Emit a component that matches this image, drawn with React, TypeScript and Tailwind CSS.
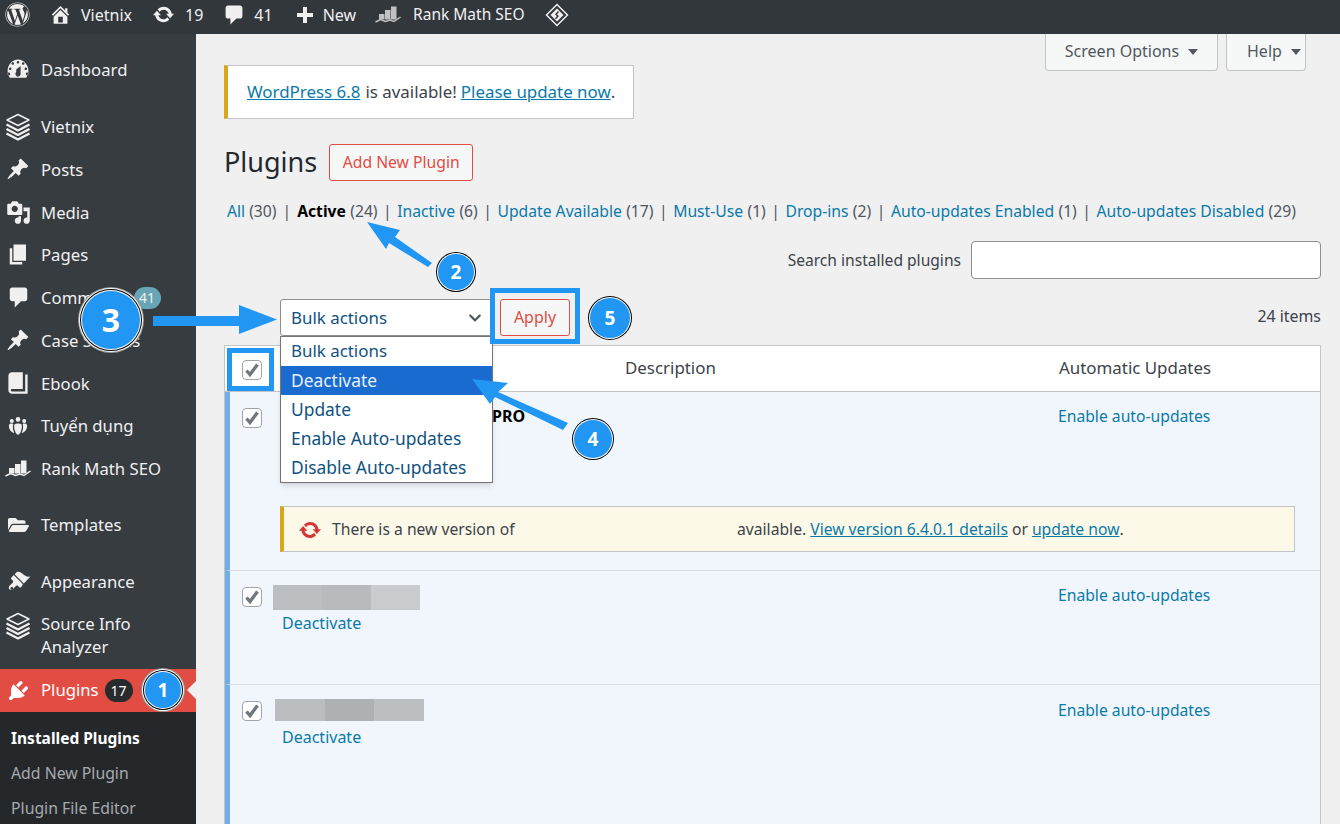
import React from "react";
import { FaWordpress, FaFolderOpen, FaChevronDown } from "react-icons/fa";

type IP = { className?: string };
const Glyph = ({ d, className = "" }: IP & { d: string }) => (
  <svg viewBox="0 0 20 20" className={className} fill="currentColor" fillRule="evenodd"><path d={d} /></svg>
);
const Comment = (p: IP) => <Glyph {...p} d="M5 2h10c1.100 0 2 .9 2 2v7c0 1.100-.9 2-2 2h-3l-5 5v-5H5c-1.100 0-2-.9-2-2V4c0-1.100.9-2 2-2z" />;
const Sync = (p: IP) => <Glyph {...p} d="M10.200 3.280c3.530 0 6.430 2.610 6.920 6h2.080l-3.500 4-3.500-4h2.320c-.45-1.970-2.210-3.450-4.320-3.450-1.450 0-2.730.71-3.540 1.780L4.950 5.660C6.230 4.200 8.110 3.280 10.200 3.280zm-.4 13.440c-3.520 0-6.430-2.610-6.920-6H.8l3.500-4c1.170 1.330 2.330 2.670 3.500 4H5.480c.45 1.970 2.210 3.450 4.320 3.450 1.450 0 2.730-.71 3.540-1.780l1.710 1.950c-1.280 1.460-3.150 2.380-5.250 2.380z" />;
const Home = (p: IP) => <Glyph {...p} d="M16 8.500l1.530 1.530-1.060 1.060L10 4.620l-6.470 6.470-1.060-1.060L10 2.500l4 4v-2h2v4zm-6-2.460l6 5.990V18H4v-5.970zM12 17v-5H8v5h4z" />;
const Plus = (p: IP) => <Glyph {...p} d="M18 8v4h-6v6H8v-6H2V8h6V2h4v6z" />;
const Gauge = (p: IP) => <Glyph {...p} d="M3.760 16h12.480c1.100-1.430 1.760-3.210 1.760-5.140 0-4.750-3.580-8.860-8-8.860-4.420 0-8 4.110-8 8.860 0 1.930.66 3.710 1.760 5.140zM10 3c.55 0 1 .45 1 1s-.45 1-1 1-1-.45-1-1 .45-1 1-1zM6 4c.55 0 1 .45 1 1s-.45 1-1 1-1-.45-1-1 .45-1 1-1zm8 0c.55 0 1 .45 1 1s-.45 1-1 1-1-.45-1-1 .45-1 1-1zm-5.370 5.550L12 7v6c0 1.100-.9 2-2 2s-2-.9-2-2c0-.57.24-1.080.63-1.450zM4 8c.55 0 1 .45 1 1s-.45 1-1 1-1-.45-1-1 .45-1 1-1zm12 0c.55 0 1 .45 1 1s-.45 1-1 1-1-.45-1-1 .45-1 1-1zM3 12c.55 0 1 .45 1 1s-.45 1-1 1-1-.45-1-1 .45-1 1-1zm14 0c.55 0 1 .45 1 1s-.45 1-1 1-1-.45-1-1 .45-1 1-1z" />;
const Pin = (p: IP) => <Glyph {...p} d="M10.440 3.020l1.820-1.820 6.360 6.350-1.830 1.820c-1.050-.68-2.480-.57-3.410.36l-.75.75c-.92.93-1.040 2.350-.35 3.400l-1.830 1.820-2.410-2.410-2.800 2.790c-.42.42-3.380 2.710-3.800 2.290s1.860-3.390 2.280-3.810l2.790-2.790L4.100 9.360l1.830-1.820c1.050.69 2.480.57 3.400-.36l.75-.75c.93-.92 1.050-2.350.36-3.410z" />;
const Media = (p: IP) => <Glyph {...p} d="M13 11V4c0-.55-.45-1-1-1h-1.670L9 1H5L3.670 3H2c-.55 0-1 .45-1 1v7c0 .55.45 1 1 1h10c.55 0 1-.45 1-1zM7 4.500c1.380 0 2.500 1.120 2.500 2.500S8.380 9.500 7 9.500 4.500 8.380 4.500 7 5.620 4.500 7 4.500zM14 6h5v10.500c0 1.380-1.120 2.500-2.500 2.500S14 17.880 14 16.500s1.120-2.500 2.500-2.500c.17 0 .34.02.5.05V9h-3V6zm-4 8.050V13h2v3.500c0 1.380-1.120 2.500-2.500 2.500S7 17.880 7 16.500 8.120 14 9.500 14c.17 0 .34.02.5.05z" />;
const Pages = (p: IP) => <Glyph {...p} d="M6 15V2h10v13H6zm-1 1h8v2H3V5h2v11z" />;
const Ebook = (p: IP) => <Glyph {...p} d="M16 3h2v16H5c-1.660 0-3-1.340-3-3V4c0-1.660 1.340-3 3-3h9v14H5c-.55 0-1 .45-1 1s.45 1 1 1h11V3z" />;
const Brush = (p: IP) => <Glyph {...p} d="M14.480 11.060L7.410 3.990l1.500-1.500c.5-.56 2.300-.47 3.510.32 1.210.8 1.430 1.280 2.910 2.100 1.180.64 2.450 1.260 4.230.91zm-.71.71L6.700 4.700 4.930 6.470c-.39.39-.39 1.020 0 1.410l1.060 1.060c.39.39.39 1.030 0 1.420-.6.6-1.600 1.590-2.120 2.120-.53.53-1.600 1.950-.5 3.050s2.520.03 3.050-.5c.53-.52 1.530-1.520 2.120-2.120.4-.4 1.030-.4 1.420 0l1.060 1.060c.39.39 1.020.39 1.410 0zM4.500 15.500c-.4-.4-.4-1 0-1.400s1-.4 1.400 0 .4 1 0 1.400-1 .4-1.400 0z" />;
const Plug = (p: IP) => <Glyph {...p} d="M13.110 4.360L9.870 7.600 8 5.730l3.240-3.240c.35-.34 1.050-.2 1.560.32.52.51.66 1.210.31 1.550zm-8 1.770l.91-1.120 9.010 9.010-1.190.84c-.71.71-2.630 1.160-3.820 1.160H6.140L4.900 17.260c-.59.59-1.540.59-2.120 0-.59-.58-.59-1.530 0-2.120l1.240-1.240v-3.880c0-1.130.4-3.190 1.090-3.890zm7.260 3.970l3.240-3.240c.34-.35 1.040-.21 1.550.31.52.51.66 1.210.31 1.550l-3.240 3.250z" />;
const Groups = ({ className = "" }: IP) => (
  <svg viewBox="0 0 20 20" className={className} fill="currentColor">
    <circle cx="10" cy="3.400" r="2.300" /><circle cx="3.800" cy="5" r="2" /><circle cx="16.200" cy="5" r="2" />
    <path d="M6.400 8.400c1.800-1.300 5.400-1.300 7.200 0 .8 3.800-.6 7.800-2.600 10H9c-2-2.200-3.400-6.200-2.600-10z" />
    <path d="M1 9c.8-1.400 2.600-1.700 4.300-1.100-.9 3.200-.3 6.600 1.100 9.200C3 16.500.4 12.800 1 9zM19 9c-.8-1.400-2.600-1.700-4.300-1.100.9 3.200.3 6.600-1.100 9.200 3.400-.6 6-4.300 5.400-8.100z" />
  </svg>
);
const RankMath = ({ className = "" }: IP) => (
  <svg viewBox="0 0 26 17" className={className} fill="currentColor">
    <path d="M4 8h5.500v5.500H4zM10 4h5.500v9.500H10zM16 .5h5.500v13H16z" />
    <path d="M.5 16L5.500 13.500 10.500 15.500 15 14 19 15.500 25.500 11" fill="none" stroke="currentColor" strokeWidth="1.500" />
  </svg>
);
const Stack = ({ className = "" }: IP) => (
  <svg viewBox="0 0 26 28" className={className} fill="none" stroke="currentColor" strokeLinejoin="round">
    <path d="M13 1.500l11 5.500-11 5.500L2 7z" strokeWidth="1.500" />
    <path d="M1.500 11.500l11.500 6 11.500-6M1.500 16l11.500 6 11.500-6M1.500 20.500l11.500 6 11.500-6" strokeWidth="2.200" />
  </svg>
);
const Diamond = ({ className = "" }: IP) => (
  <svg viewBox="0 0 24 24" className={className} fill="none" stroke="currentColor">
    <path d="M12 1.500L22.500 12 12 22.500 1.500 12z" strokeWidth="1.500" />
    <path d="M12 5.500l6.500 6.500-6.500 6.500L5.500 12z" fill="currentColor" stroke="none" />
    <path d="M13.500 8.500l-2.500 3 2 1.500-2.500 2.800" stroke="#32373c" strokeWidth="1.400" />
  </svg>
);

const Side = ({ icon, children, className = "" }: { icon: React.ReactNode; children: React.ReactNode; className?: string }) => (
  <div className={`flex items-center h-[42.750px] shrink-0 text-[#f0f0f1] ${className}`}>
    <span className="w-[41px] flex justify-center pr-[5px] shrink-0">{icon}</span>
    <span>{children}</span>
  </div>
);

const Check = ({ className = "" }: IP) => (
  <span className={`flex items-center justify-center w-[20px] h-[20px] rounded-[4px] border border-[#a0a4a8] bg-white shrink-0 ${className}`}>
    <svg viewBox="0 0 16 16" className="w-[16px] h-[16px]" fill="none" stroke="#6f777f" strokeWidth="3.400"><path d="M2.500 8.500l3.500 4 7.500-10" /></svg>
  </span>
);

const Caret = () => <span className="inline-block w-0 h-0 border-x-[5px] border-x-transparent border-t-[6px] border-t-[#50575e] ml-[9px] mt-[2px]" />;

const Link = ({ children, className = "" }: { children: React.ReactNode; className?: string }) => (
  <a className={`text-[#0a7aa8] ${className}`}>{children}</a>
);

const Filter = ({ label, n }: { label: string; n: string }) => (
  <span className="flex items-center">
    <span className="text-[#50575e] mx-[5.500px]">|</span>
    <Link>{label}</Link>
    <span className="text-[#50575e] ml-[4.300px]">{n}</span>
  </span>
);

const Circle = ({ n, className }: { n: string; className: string }) => (
  <div className={`absolute flex items-center justify-center rounded-full bg-[#2196f3] text-white font-bold ${className}`}>{n}</div>
);

export default function App() {
  return (
    <div className="relative w-[1340px] h-[824px] overflow-hidden bg-[#f0f0f1] font-['Noto_Sans',sans-serif] text-[16px] text-[#3c434a] flex flex-col">
      {/* Admin bar */}
      <header className="h-[34px] shrink-0 bg-[#32373c] text-[#f0f0f1] flex items-center pb-[5px] text-[16px] leading-none">
        <FaWordpress className="w-[25px] h-[25px] ml-[5px]" />
        <Home className="w-[23px] h-[23px] ml-[19px]" />
        <span className="ml-[9px]">Vietnix</span>
        <Sync className="w-[23px] h-[23px] ml-[20px]" />
        <span className="ml-[10px]">19</span>
        <Comment className="w-[24px] h-[24px] ml-[19px]" />
        <span className="ml-[8px]">41</span>
        <Plus className="w-[20px] h-[20px] ml-[22px]" />
        <span className="ml-[8px]">New</span>
        <RankMath className="w-[26px] h-[17px] ml-[19px] opacity-75" />
        <span className="ml-[12px] text-[15.500px]">Rank Math SEO</span>
        <Diamond className="w-[24px] h-[24px] ml-[20px]" />
      </header>

      <div className="flex flex-1 min-h-0">
        {/* Sidebar */}
        <aside className="w-[196px] shrink-0 bg-[#373c41] flex flex-col pt-[14.600px] overflow-hidden text-[16.700px]">
          <Side icon={<Gauge className="w-[26px] h-[26px]" />}>Dashboard</Side>
          <Side className="mt-[13.900px]" icon={<Stack className="w-[26px] h-[28px]" />}>Vietnix</Side>
          <Side icon={<Pin className="w-[24px] h-[24px]" />}>Posts</Side>
          <Side icon={<Media className="w-[25px] h-[25px]" />}>Media</Side>
          <Side icon={<Pages className="w-[25px] h-[25px]" />}>Pages</Side>
          <Side icon={<Comment className="w-[25px] h-[25px]" />}>
            <span className="flex items-center">Comments<span className="ml-[7px] h-[22px] w-[27px] rounded-full bg-[#67a5b5] text-[14px] flex items-center justify-center">41</span></span>
          </Side>
          <Side icon={<Pin className="w-[24px] h-[24px]" />}>Case Studies</Side>
          <Side icon={<Ebook className="w-[24px] h-[24px]" />}>Ebook</Side>
          <Side icon={<Groups className="w-[20px] h-[20px]" />}>Tuyển dụng</Side>
          <Side icon={<RankMath className="w-[26px] h-[17px]" />}>Rank Math SEO</Side>
          <Side className="mt-[13.550px]" icon={<FaFolderOpen className="w-[21px] h-[20px]" />}>Templates</Side>
          <Side className="mt-[14.250px]" icon={<Brush className="w-[26px] h-[26px]" />}>Appearance</Side>
          <div className="flex h-[65.600px] shrink-0 text-[#f0f0f1] leading-[23px] pt-[9px]">
            <span className="w-[41px] flex justify-center pr-[5px] shrink-0"><Stack className="w-[26px] h-[28px]" /></span>
            <span>Source Info<br />Analyzer</span>
          </div>
          <div className="relative flex items-center h-[43px] shrink-0 bg-[#e14d43] text-white">
            <span className="w-[41px] flex justify-center pr-[5px] shrink-0"><Plug className="w-[25px] h-[25px]" /></span>
            <span className="pb-[1px]">Plugins</span>
            <span className="ml-[6px] w-[28px] h-[23px] rounded-full bg-[#272b2e] text-[14px] flex items-center justify-center">17</span>
            <span className="absolute right-0 top-1/2 -translate-y-1/2 w-0 h-0 border-y-[9px] border-y-transparent border-r-[9px] border-r-[#f0f0f1]" />
          </div>
          <div className="flex-1 shrink-0 bg-[#25282b] pt-[9.500px] pl-[11px] text-[15.800px]">
            <div className="h-[35px] flex items-center font-bold text-white text-[15.500px]">Installed Plugins</div>
            <div className="h-[35px] flex items-center text-[#a7aaad]">Add New Plugin</div>
            <div className="h-[35px] flex items-center text-[#a7aaad]">Plugin File Editor</div>
          </div>
        </aside>

        {/* Main */}
        <main className="flex-1 min-w-0 pl-[28px] pr-[19px] flex flex-col">
          <div className="relative">
            <div className="absolute top-0 right-[15px] flex gap-[8px] text-[#50575e]">
              <div className="h-[37px] w-[173px] bg-[#f6f7f7] border border-t-0 border-[#c3c4c7] rounded-b-[4px] flex items-center justify-center pb-[2px]">Screen Options<Caret /></div>
              <div className="h-[37px] w-[80px] bg-[#f6f7f7] border border-t-0 border-[#c3c4c7] rounded-b-[4px] flex items-center pl-[20px] pb-[2px]">Help<Caret /></div>
            </div>
          </div>

          <div className="mt-[31px] w-[410px] h-[54px] bg-white border border-[#c3c4c7] border-l-[4px] border-l-[#dba617] flex items-center pl-[19px] text-[16.900px]">
            <Link className="underline">WordPress 6.8</Link>
            <span className="ml-[5px]">is available!</span>
            <Link className="underline ml-[4px]">Please update now</Link>.
          </div>

          <div className="mt-[25px] h-[37px] flex items-center">
            <h1 className="text-[27px] text-[#23282d] font-normal">Plugins</h1>
            <button className="ml-[12px] w-[144px] h-[37px] rounded-[3px] border border-[#e14d43] text-[#e14d43] bg-[#f6f7f7] text-[15.700px]">Add New Plugin</button>
          </div>

          <div className="mt-[20px] h-[22px] flex items-center pl-[3px] whitespace-nowrap text-[15.700px]">
            <span className="flex items-center">
              <Link>All</Link>
              <span className="text-[#50575e] ml-[4px]">(30)</span>
            </span>
            <span className="text-[#50575e] mx-[6px]">|</span>
            <span className="font-bold text-black">Active</span>
            <span className="text-[#50575e] ml-[4.300px]">(24)</span>
            <Filter label="Inactive" n="(6)" />
            <Filter label="Update Available" n="(17)" />
            <Filter label="Must-Use" n="(1)" />
            <Filter label="Drop-ins" n="(2)" />
            <Filter label="Auto-updates Enabled" n="(1)" />
            <Filter label="Auto-updates Disabled" n="(29)" />
          </div>

          <div className="mt-[18px] h-[38px] flex items-center justify-end text-[15.600px]">
            <label className="mt-[2px]">Search installed plugins</label>
            <div className="ml-[10px] w-[350px] h-[38px] bg-white border border-[#8c8f94] rounded-[4px]" />
          </div>

          <div className="mt-[20px] h-[37px] flex items-center">
            <div className="relative ml-[56px] w-[212px] h-[37px] bg-white border border-[#8c8f94] rounded-[3px] flex items-center pl-[10px] text-[#0f5280] text-[16.900px] z-10">
              Bulk actions
              <FaChevronDown className="absolute right-[9px] w-[14px] h-[14px] text-[#50575e]" />
              <div className="absolute left-[-1px] top-[36px] w-[213px] bg-white border border-[#767676] text-[#0f5280] text-[17.400px] shadow-md">
                <div className="h-[29px] flex items-center pl-[10px] pb-[2px] text-[16.900px]">Bulk actions</div>
                <div className="h-[29px] flex items-center pl-[10px] bg-[#1a6bcf] text-[#e6f0fa]">Deactivate</div>
                <div className="h-[29px] flex items-center pl-[10px]">Update</div>
                <div className="h-[29px] flex items-center pl-[10px]">Enable Auto-updates</div>
                <div className="h-[29px] flex items-center pl-[10px]">Disable Auto-updates</div>
              </div>
            </div>
            <button className="ml-[8px] w-[70px] h-[37px] rounded-[3px] border border-[#e14d43] text-[#e14d43] bg-[#f6f7f7] pb-[2px]">Apply</button>
            <span className="ml-auto pb-[2px] text-[15.900px]">24 items</span>
          </div>

          {/* Table */}
          <div className="mt-[9px] flex-1 border-x border-t border-[#c3c4c7] flex flex-col min-h-0 -mb-[2px]">
            <div className="h-[46px] shrink-0 bg-white border-b border-[#c3c4c7] grid grid-cols-[400px_434px_1fr] items-center text-[16.900px] pb-[2px]">
              <div className="pl-[17px]"><Check className="mt-[4px]" /></div>
              <div>Description</div>
              <div>Automatic Updates</div>
            </div>

            <div className="h-[179px] shrink-0 bg-[#f0f6fc] border-l-[5px] border-l-[#72aee6] border-b border-b-[#dcdcde] relative">
              <div className="grid grid-cols-[828px_1fr] pt-[12px]">
                <div className="pl-[12px] flex">
                  <Check className="mt-[4px]" />
                  <span className="ml-[230px] font-bold text-black">PRO</span>
                </div>
                <Link className="text-[15.700px] mt-[1px]">Enable auto-updates</Link>
              </div>
              <div className="absolute left-[50px] top-[114px] w-[1015px] h-[46px] bg-[#fcf9e8] border border-[#c3c4c7] border-l-[4px] border-l-[#dba617] flex items-center pl-[16px] pt-[2px] whitespace-nowrap text-[15.700px]">
                <Sync className="w-[24px] h-[24px] text-[#d63638] -ml-[2px]" />
                <span className="ml-[10px] w-[405px]">There is a new version of</span>
                <span>available.</span>
                <Link className="underline ml-[4px]">View version 6.4.0.1 details</Link>
                <span className="ml-[4px]">or</span>
                <Link className="underline ml-[4px]">update now</Link>.
              </div>
            </div>

            <div className="h-[114px] shrink-0 bg-[#f0f6fc] border-l-[5px] border-l-[#72aee6] border-b border-b-[#dcdcde] grid grid-cols-[828px_1fr] pt-[12px]">
              <div className="flex pl-[12px]">
                <Check className="mt-[4px]" />
                <div className="ml-[11px] mt-[2px]">
                  <div className="flex h-[25px] w-[147px]">
                    <span className="flex-1 bg-[#bcbfc2]" /><span className="flex-1 bg-[#b7bbbe]" /><span className="flex-1 bg-[#c8cccf]" />
                  </div>
                  <Link className="block ml-[9px] mt-[1px]">Deactivate</Link>
                </div>
              </div>
              <Link className="text-[15.700px] mt-[1px]">Enable auto-updates</Link>
            </div>

            <div className="flex-1 bg-[#f0f6fc] border-l-[5px] border-l-[#72aee6] border-b border-b-[#dcdcde] grid grid-cols-[828px_1fr] pt-[13px]">
              <div className="flex pl-[12px]">
                <Check className="mt-[3px]" />
                <div className="ml-[13px] mt-[1px]">
                  <div className="flex h-[22px] w-[149px]">
                    <span className="flex-1 bg-[#bbbec0]" /><span className="flex-1 bg-[#aeb1b4]" /><span className="flex-1 bg-[#bbbfc2]" />
                  </div>
                  <Link className="block ml-[7px] mt-[4px]">Deactivate</Link>
                </div>
              </div>
              <Link className="text-[15.700px] mt-[1px]">Enable auto-updates</Link>
            </div>
          </div>
        </main>
      </div>

      {/* Annotations */}
      <div className="absolute left-[490px] top-[288px] w-[90px] h-[56px] border-[5px] border-[#2196f3] z-20" />
      <div className="absolute left-[227px] top-[348px] w-[47px] h-[43px] border-[5px] border-[#2196f3] z-20" />
      <svg className="absolute inset-0 z-20 pointer-events-none" width="1340" height="824" fill="#2196f3">
        <path d="M153 316H239V305L277 319.500 239 334V326H153z" />
        <path d="M367 222L400 230 395 237 432 263 428 267 389 243 386 249z" />
        <path d="M472 379L508 383 498 392 568 423 563 430 495 397 490 404z" />
      </svg>
      <div className="z-30">
        <Circle n="1" className="left-[145px] top-[672px] w-[36px] h-[36px] text-[19px] shadow-[0_0_0_1px_#fff,0_0_0_2px_#000,0_0_0_3px_#fff,0_0_0_4px_#999]" />
        <Circle n="2" className="left-[438px] top-[254px] w-[36px] h-[36px] text-[19px] shadow-[0_0_0_1px_#fff,0_0_0_2px_#000]" />
        <Circle n="3" className="left-[82px] top-[291px] w-[58px] h-[58px] text-[32px] shadow-[0_0_0_1px_#fff,0_0_0_2px_#000,0_0_0_3px_#fff,0_0_0_4px_#999]" />
        <Circle n="4" className="left-[574px] top-[420px] w-[38px] h-[38px] text-[19px] shadow-[0_0_0_1px_#fff,0_0_0_2px_#000]" />
        <Circle n="5" className="left-[590px] top-[298px] w-[40px] h-[40px] text-[19px] shadow-[0_0_0_1px_#fff,0_0_0_2px_#000]" />
      </div>
    </div>
  );
}
